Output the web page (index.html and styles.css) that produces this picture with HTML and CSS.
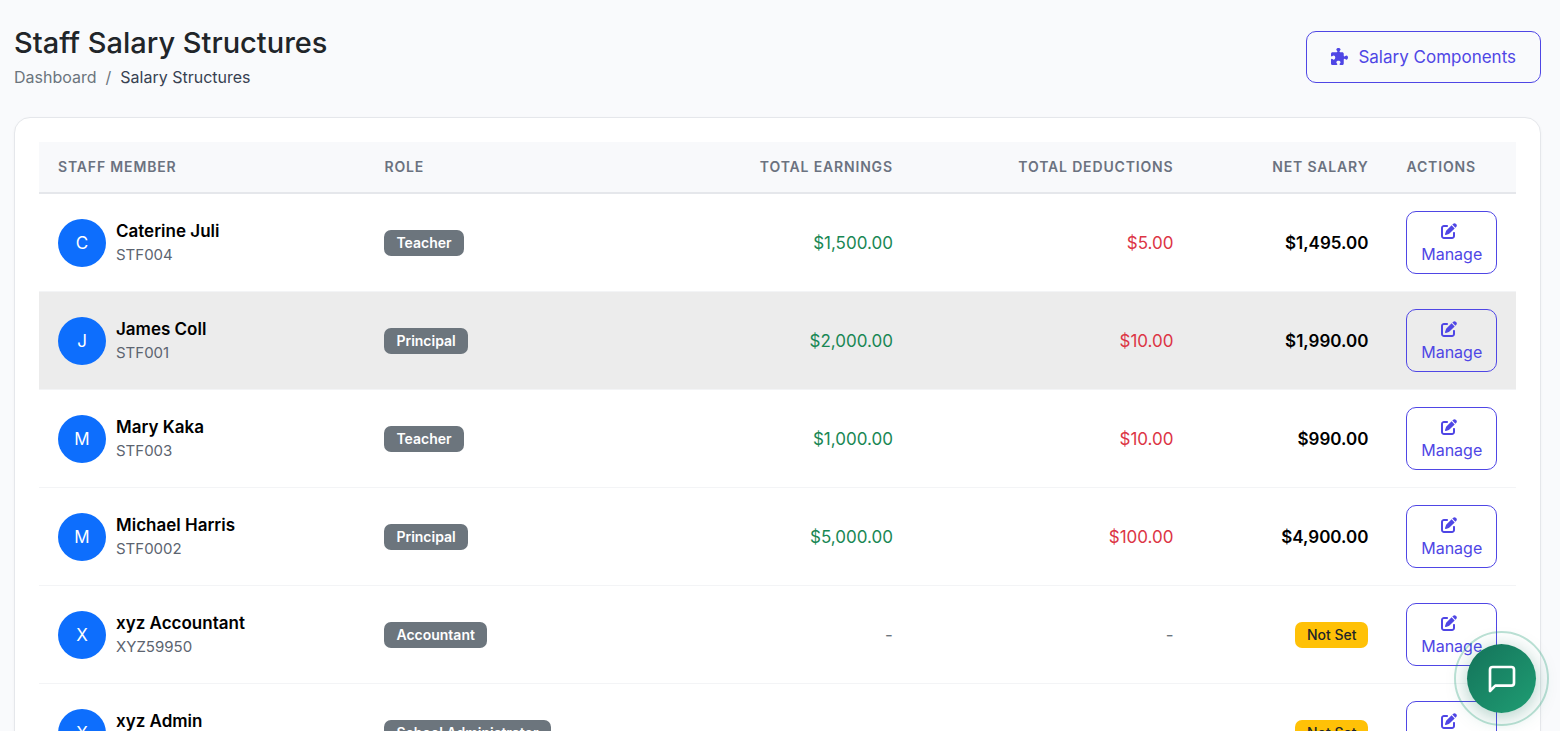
FILE: index.html
```html
<!DOCTYPE html>
<html lang="en">
<head>
<meta charset="utf-8">
<meta name="viewport" content="width=device-width, initial-scale=1">
<title>Staff Salary Structures</title>
<link rel="stylesheet" href="styles.css">
</head>
<body>
<svg class="sprite" aria-hidden="true">
  <symbol id="edit" viewBox="0 0 512 512"><path d="M471.6 21.7c-21.9-21.9-57.3-21.9-79.2 0L362.3 51.7l97.9 97.9 30.1-30.1c21.9-21.9 21.9-57.3 0-79.2L471.6 21.7zm-299.2 220c-6.1 6.1-10.8 13.6-13.5 21.9l-29.6 88.8c-2.9 8.6-.6 18.1 5.8 24.6s15.9 8.7 24.6 5.8l88.8-29.6c8.2-2.7 15.7-7.4 21.9-13.5L437.7 172.3 339.7 74.3 172.4 241.7zM96 64C43 64 0 107 0 160V416c0 53 43 96 96 96H352c53 0 96-43 96-96V320c0-17.7-14.3-32-32-32s-32 14.3-32 32v96c0 17.7-14.3 32-32 32H96c-17.7 0-32-14.3-32-32V160c0-17.7 14.3-32 32-32h96c17.7 0 32-14.3 32-32s-14.3-32-32-32H96z"/></symbol>
  <symbol id="puzzle" viewBox="0 0 512 512"><path d="M192 104.8c0-9.2-5.8-17.3-13.2-22.8C167.2 73.3 160 61.3 160 48c0-26.500 28.700-48 64-48s64 21.500 64 48c0 13.300-7.200 25.300-18.800 34c-7.400 5.500-13.200 13.600-13.200 22.800c0 12.800 10.400 23.200 23.200 23.200H336c26.500 0 48 21.500 48 48v56.800c0 12.800 10.400 23.200 23.200 23.200c9.200 0 17.300-5.800 22.800-13.200c8.700-11.600 20.700-18.800 34-18.800c26.500 0 48 28.700 48 64s-21.500 64-48 64c-13.300 0-25.300-7.200-34-18.800c-5.500-7.400-13.600-13.200-22.800-13.200c-12.800 0-23.200 10.400-23.200 23.200V464c0 26.500-21.500 48-48 48H279.200c-12.800 0-23.200-10.400-23.200-23.200c0-9.200 5.800-17.300 13.200-22.800c11.600-8.700 18.800-20.700 18.800-34c0-26.500-28.700-48-64-48s-64 21.500-64 48c0 13.300 7.200 25.300 18.800 34c7.400 5.500 13.200 13.600 13.200 22.800c0 12.800-10.400 23.200-23.200 23.200H48c-26.500 0-48-21.500-48-48V343.200C0 330.400 10.400 320 23.200 320c9.200 0 17.300 5.800 22.800 13.200C54.700 344.800 66.700 352 80 352c26.500 0 48-28.700 48-64s-21.500-64-48-64c-13.300 0-25.300 7.200-34 18.800C40.500 250.200 32.400 256 23.200 256C10.400 256 0 245.600 0 232.800V176c0-26.500 21.500-48 48-48H168.800c12.800 0 23.200-10.400 23.200-23.200z"/></symbol>
</svg>
<main class="page">
  <header class="page-header">
    <div>
      <h1 class="page-title">Staff Salary Structures</h1>
      <nav class="breadcrumb" aria-label="Breadcrumb">
        <a href="#">Dashboard</a><span>/</span><span class="current">Salary Structures</span>
      </nav>
    </div>
    <a class="btn btn-lg" href="#"><svg class="icon-lg"><use href="#puzzle"/></svg>Salary Components</a>
  </header>
  <section class="card">
    <table class="table">
      <colgroup><col class="c-staff"><col class="c-role"><col class="c-earn"><col class="c-ded"><col class="c-net"><col class="c-act"></colgroup>
      <thead>
        <tr><th>Staff Member</th><th>Role</th><th class="num">Total Earnings</th><th class="num">Total Deductions</th><th class="num">Net Salary</th><th>Actions</th></tr>
      </thead>
      <tbody>
        <tr>
          <td><div class="staff"><span class="avatar">C</span><div><div class="name">Caterine Juli</div><div class="code">STF004</div></div></div></td>
          <td><span class="badge">Teacher</span></td>
          <td class="num earn">$1,500.00</td><td class="num ded">$5.00</td><td class="num net">$1,495.00</td>
          <td><a class="btn btn-manage" href="#"><svg class="icon"><use href="#edit"/></svg>Manage</a></td>
        </tr>
        <tr class="active">
          <td><div class="staff"><span class="avatar">J</span><div><div class="name">James Coll</div><div class="code">STF001</div></div></div></td>
          <td><span class="badge">Principal</span></td>
          <td class="num earn">$2,000.00</td><td class="num ded">$10.00</td><td class="num net">$1,990.00</td>
          <td><a class="btn btn-manage" href="#"><svg class="icon"><use href="#edit"/></svg>Manage</a></td>
        </tr>
        <tr>
          <td><div class="staff"><span class="avatar">M</span><div><div class="name">Mary Kaka</div><div class="code">STF003</div></div></div></td>
          <td><span class="badge">Teacher</span></td>
          <td class="num earn">$1,000.00</td><td class="num ded">$10.00</td><td class="num net">$990.00</td>
          <td><a class="btn btn-manage" href="#"><svg class="icon"><use href="#edit"/></svg>Manage</a></td>
        </tr>
        <tr>
          <td><div class="staff"><span class="avatar">M</span><div><div class="name">Michael Harris</div><div class="code">STF0002</div></div></div></td>
          <td><span class="badge">Principal</span></td>
          <td class="num earn">$5,000.00</td><td class="num ded">$100.00</td><td class="num net">$4,900.00</td>
          <td><a class="btn btn-manage" href="#"><svg class="icon"><use href="#edit"/></svg>Manage</a></td>
        </tr>
        <tr>
          <td><div class="staff"><span class="avatar">X</span><div><div class="name">xyz Accountant</div><div class="code">XYZ59950</div></div></div></td>
          <td><span class="badge">Accountant</span></td>
          <td class="num none">-</td><td class="num none">-</td><td class="num"><span class="badge warn">Not Set</span></td>
          <td><a class="btn btn-manage" href="#"><svg class="icon"><use href="#edit"/></svg>Manage</a></td>
        </tr>
        <tr>
          <td><div class="staff"><span class="avatar">X</span><div><div class="name">xyz Admin</div><div class="code"></div></div></div></td>
          <td><span class="badge">School Administrator</span></td>
          <td class="num none"></td><td class="num none"></td><td class="num"><span class="badge warn">Not Set</span></td>
          <td><a class="btn btn-manage" href="#"><svg class="icon"><use href="#edit"/></svg>Manage</a></td>
        </tr>
      </tbody>
    </table>
  </section>
</main>
<button class="chat" type="button" aria-label="Open chat">
  <svg class="chat-icon" viewBox="0 0 24 24"><path d="M21 15a2 2 0 0 1-2 2H7l-4 4V5a2 2 0 0 1 2-2h14a2 2 0 0 1 2 2z"/></svg>
</button>
</body>
</html>
```
FILE: styles.css
```css
* { box-sizing: border-box; }

body {
  margin: 0;
  background: #f9fafc;
  color: #212529;
  font: 400 17px/24px Inter, "Liberation Sans", sans-serif;
}

a { color: inherit; text-decoration: none; }

.sprite { position: absolute; width: 0; height: 0; }

.page { padding: 24px 19px 24px 14px; }

.page-header {
  display: flex;
  justify-content: space-between;
  align-items: center;
  margin-bottom: 28px;
}

.page-title { margin: 0; font-size: 29px; line-height: 38px; font-weight: 500; }

.breadcrumb {
  display: flex;
  gap: 9px;
  margin-top: 3px;
  font-size: 16px;
  color: #6c757d;
}
.breadcrumb .current { color: #374151; }

.btn {
  display: inline-flex;
  align-items: center;
  justify-content: center;
  border: 1px solid #4f46e5;
  border-radius: 10px;
  color: #4f46e5;
  font-weight: 400;
}
.btn-lg { height: 52px; padding: 0 24px; gap: 10px; }
.btn-manage {
  width: 100%;
  height: 63px;
  flex-direction: column;
  font-size: 16px;
}

svg { fill: currentColor; }
.icon-lg { width: 17px; height: 17px; }
.icon { width: 16px; height: 16px; margin: 3px 5px 3px 0; }

.card {
  padding: 24px;
  border: 1px solid #e5e7eb;
  border-radius: 16px;
  background: #fff;
  box-shadow: 0 1px 3px rgba(0, 0, 0, .04);
}

.table { width: 100%; table-layout: fixed; border-collapse: separate; border-spacing: 0; }
.c-staff { width: 22.1%; }
.c-role { width: 22%; }
.c-earn { width: 15%; }
.c-ded { width: 19%; }
.c-net { width: 13.2%; }
.c-act { width: 8.7%; }

th {
  padding: 14px 19px;
  border-bottom: 2px solid #e5e7eb;
  background: #f8f9fb;
  color: #6b7280;
  font-size: 14px;
  line-height: 22px;
  font-weight: 600;
  letter-spacing: 0.06em;
  text-align: left;
  text-transform: uppercase;
  white-space: nowrap;
}
td {
  height: 98px;
  padding: 0 19px;
  border-bottom: 1px solid #f3f4f6;
  vertical-align: middle;
}
.active td { background: #ececec; }
.num { text-align: right; }
.earn { color: #198754; }
.ded { color: #dc3545; }
.net { color: #000; font-weight: 600; }
.none { color: #6c757d; }

.staff { display: flex; align-items: center; gap: 10px; }
.avatar {
  display: flex;
  align-items: center;
  justify-content: center;
  width: 48px;
  height: 48px;
  border-radius: 50%;
  background: #0d6efd;
  color: #fff;
}
.name { color: #000; font-weight: 600; }
.code { min-height: 24px; color: #5c6470; font-size: 15px; }

.badge {
  display: inline-block;
  padding: 0 12px;
  border-radius: 7px;
  background: #6c757d;
  color: #fff;
  font-size: 14px;
  line-height: 26px;
  font-weight: 600;
  vertical-align: middle;
}
.badge.warn { background: #ffc107; color: #212529; font-weight: 500; }

.chat {
  position: fixed;
  right: 24px;
  bottom: 18px;
  display: grid;
  place-items: center;
  width: 69px;
  height: 69px;
  padding: 0;
  border: 0;
  border-radius: 50%;
  background: linear-gradient(135deg, #14735a, #1f9d73);
  box-shadow: 0 4px 20px rgba(20, 115, 90, .35);
  color: #fff;
}
.chat::before {
  content: "";
  position: absolute;
  inset: -13px;
  border: 2px solid rgba(31, 157, 115, .3);
  border-radius: 50%;
}
.chat-icon {
  width: 32px;
  height: 32px;
  fill: none;
  stroke: currentColor;
  stroke-width: 2;
  stroke-linecap: round;
  stroke-linejoin: round;
}
```
